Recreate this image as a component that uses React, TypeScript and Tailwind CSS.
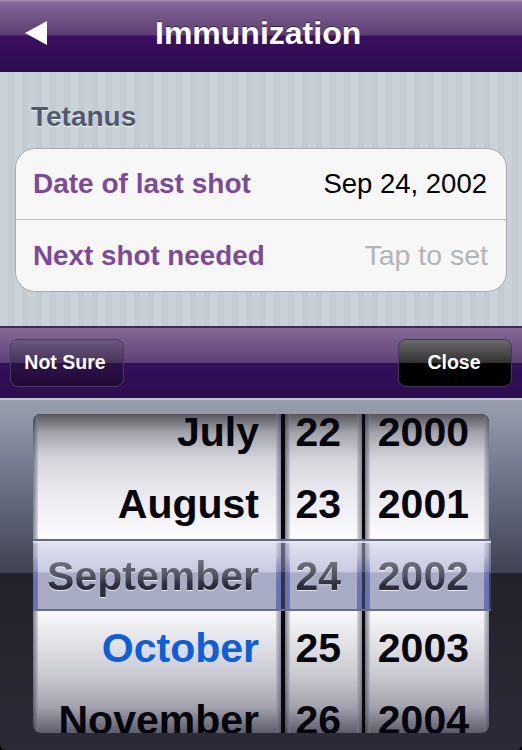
import React from 'react';

const months = ['July', 'August', 'September', 'October', 'November'];
const days = ['22', '23', '24', '25', '26'];
const years = ['2000', '2001', '2002', '2003', '2004'];
const selected = ['September', '24', '2002'];

const drum =
  'bg-[linear-gradient(180deg,#56565c_0%,#a4a4ac_6%,#d4d4dc_14%,#e8e8ee_24%,#fbfbfd_38%,#fdfdfe_60%,#e6e6ea_70%,#c9c9d1_82%,#a2a2ae_92%,#5c5c6a_100%)]';

function Wheel({ items, className, pad }: { items: string[]; className: string; pad: string }) {
  return (
    <div className={`relative h-full overflow-hidden ${drum} ${className}`}>
      <div className="-mt-[18px] flex flex-col">
        {items.map((item) => (
          <div
            key={item}
            className={`flex h-[72px] shrink-0 items-center justify-end ${pad} text-[41px] font-bold leading-none ${
              item === 'October' ? 'text-[#0a5fdc]' : 'text-[#05050c]'
            }`}
          >
            {selected.includes(item) ? (
              <span className="relative z-10 bg-[linear-gradient(180deg,#6c6f7c_15%,#4e515e_50%,#2b2d3c_70%)] bg-clip-text text-transparent [filter:drop-shadow(0_1px_0_rgba(255,255,255,0.75))]">
                {item}
              </span>
            ) : (
              item
            )}
          </div>
        ))}
      </div>
      <div className="absolute inset-y-0 left-0 w-[5px] bg-[linear-gradient(90deg,rgba(50,50,70,0.6),rgba(140,140,165,0.3))]" />
      <div className="absolute inset-y-0 right-0 w-[5px] bg-[linear-gradient(270deg,rgba(70,70,90,0.55),rgba(140,140,165,0.3))]" />
    </div>
  );
}

function Strip({ className }: { className: string }) {
  return (
    <div
      className={`absolute inset-y-0 w-[5px] bg-[linear-gradient(180deg,rgba(110,118,180,0)_20%,rgba(100,108,180,0.75)_60%,rgba(100,108,180,0.8)_100%)] ${className}`}
    />
  );
}

export default function App() {
  return (
    <div className="flex h-[750px] w-[522px] flex-col overflow-hidden bg-black font-['Liberation_Sans',Arial,sans-serif]">
      {/* Nav bar */}
      <header className="flex h-[72px] shrink-0 items-center border-b border-[#1f1a2b] bg-[linear-gradient(180deg,#a78eb2_0px,#846796_3px,#5c3e74_35px,#3a1060_36px,#2d0c4d_71px)] pb-[5px]">
        <svg width="22" height="24" viewBox="0 0 22 24" className="ml-[25px]">
          <polygon points="0,12 22,0 22,24" fill="#fff" />
        </svg>
        <h1 className="ml-[108px] text-[32px] font-bold leading-none text-white [text-shadow:0_-1px_0_rgba(0,0,0,0.5)]">
          Immunization
        </h1>
      </header>

      {/* Form area */}
      <section className="h-[254px] shrink-0 bg-[repeating-linear-gradient(90deg,#c9d1d9_0px,#c9d1d9_8px,#c3cbd3_8px,#c3cbd3_14px)] px-[15px] pt-[29px]">
        <h2 className="ml-[16px] h-[32px] text-[28px] font-bold leading-[32px] text-[#4f5a70] [text-shadow:0_1px_0_#fff]">
          Tetanus
        </h2>
        <div className="mt-[15px] w-[492px] rounded-[20px] border border-[#a9a9ab] bg-[#f7f7f7]">
          <div className="flex h-[71px] items-center justify-between border-b border-[#bdbdbf] pl-[17px] pr-[19px]">
            <span className="text-[28px] font-bold text-[#7d4a9a]">Date of last shot</span>
            <span className="text-[27.5px] text-black">Sep 24, 2002</span>
          </div>
          <div className="flex h-[71px] items-center justify-between pl-[17px] pr-[18px]">
            <span className="text-[27.8px] font-bold text-[#7d4a9a]">Next shot needed</span>
            <span className="text-[28.5px] text-[#b4b4b6]">Tap to set</span>
          </div>
        </div>
      </section>

      {/* Toolbar */}
      <div className="flex h-[74px] shrink-0 items-center justify-between border-y-2 border-t-[#3b3049] border-b-[#c5c7d0] bg-[linear-gradient(180deg,#866a98_0%,#5c3e76_50%,#33105a_50%,#2d0d50_100%)] px-[10px]">
        <button className="h-[48px] w-[114px] rounded-[8px] border border-[#4b3a5e] bg-[linear-gradient(180deg,#6c5880_0%,#473259_50%,#2d1147_50%,#210b39_100%)] pr-[4px] text-[19.5px] font-bold text-white">
          Not Sure
        </button>
        <button className="h-[48px] w-[114px] rounded-[8px] border border-[#46385a] bg-[linear-gradient(180deg,#6a6a6a_0%,#303030_50%,#000_50%,#000_100%)] pr-[2px] text-[19.5px] font-bold text-white">
          Close
        </button>
      </div>

      {/* Date picker */}
      <div className="min-h-0 flex-1 rounded-b-[6px] bg-[linear-gradient(180deg,#9a9fb0_0%,#6a6f84_25%,#3f4252_49.4%,#21222c_49.4%,#2a2b36_100%)] px-[33px] pt-[14px]">
        <div className="relative h-[319px] w-[456px]">
          <div className="flex h-full overflow-hidden rounded-[8px] bg-[#08080c]">
            <Wheel items={months} className="w-[248px]" pad="pr-[22px]" />
            <div className="w-[4px] shrink-0" />
            <Wheel items={days} className="w-[77px]" pad="pr-[21px]" />
            <div className="w-[3px] shrink-0" />
            <Wheel items={years} className="w-[124px]" pad="pr-[20px]" />
          </div>
          {/* Selection band */}
          <div className="absolute -right-[2px] left-0 top-[125px] h-[72px] border-y-2 border-t-[#666b82] border-b-[#6a6e80] bg-[linear-gradient(180deg,rgba(196,202,228,0.5)_0%,rgba(150,156,195,0.5)_45%,rgba(86,92,140,0.5)_47%,rgba(86,92,140,0.5)_100%)]">
            <div className="h-[2px] bg-[#e6e9f4]/80" />
            <Strip className="left-0" />
            <Strip className="left-[243px]" />
            <Strip className="left-[252px]" />
            <Strip className="left-[324px]" />
            <Strip className="left-[332px]" />
            <Strip className="left-[451px]" />
          </div>
        </div>
      </div>
    </div>
  );
}
